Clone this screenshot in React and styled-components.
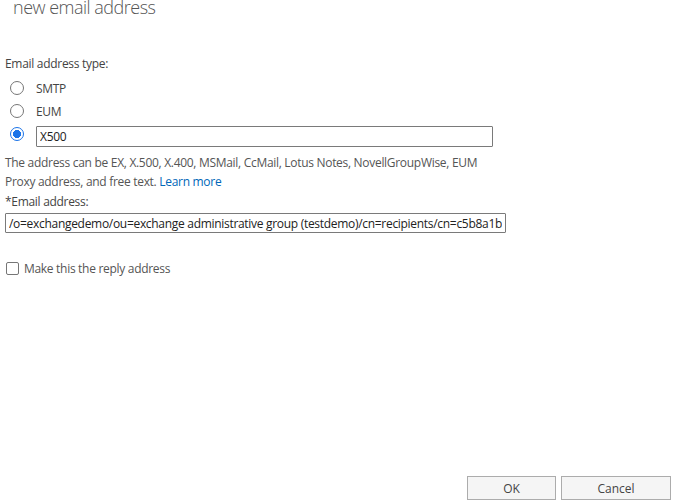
import React, { useState } from "react";
import styled, { createGlobalStyle } from "styled-components";

const GlobalStyle = createGlobalStyle`
  html, body {
    margin: 0;
    padding: 0;
    background: #fff;
  }
  body {
    font-family: "Segoe UI", "Open Sans", "Noto Sans", sans-serif;
    color: #333;
  }
`;

const ADDRESS =
  "/o=exchangedemo/ou=exchange administrative group (testdemo)/cn=recipients/cn=c5b8a1b2c3d4e5f6a7b8c9d0e1f2a3b4-x500";

const App = () => {
  const [type, setType] = useState("x500");
  const [reply, setReply] = useState(false);

  return (
    <>
      <GlobalStyle />
      <Page>
        <Title>new email address</Title>
        <Form>
          <Label>Email address type:</Label>
          <RadioList>
            <RadioRow onClick={() => setType("smtp")}>
              <Radio checked={type === "smtp"} />
              <RadioText>SMTP</RadioText>
            </RadioRow>
            <RadioRow onClick={() => setType("eum")}>
              <Radio checked={type === "eum"} />
              <RadioText>EUM</RadioText>
            </RadioRow>
            <RadioRow onClick={() => setType("x500")}>
              <Radio checked={type === "x500"} />
              <TypeInput defaultValue="X500" />
            </RadioRow>
          </RadioList>
          <Help>
            The address can be EX, X.500, X.400, MSMail, CcMail, Lotus Notes,
            NovellGroupWise, EUM Proxy address, and free text.{" "}
            <a href="#">Learn more</a>
          </Help>
          <Label className="address">*Email address:</Label>
          <AddressInput defaultValue={ADDRESS} />
          <CheckRow onClick={() => setReply(!reply)}>
            <Check checked={reply} />
            <span>Make this the reply address</span>
          </CheckRow>
        </Form>
        <Footer>
          <Button>OK</Button>
          <Button wide>Cancel</Button>
        </Footer>
      </Page>
    </>
  );
};

const Page = styled.div`
  display: flex;
  flex-direction: column;
  height: 504px;
  box-sizing: border-box;
  padding: 0 6px 4px 5px;
  overflow: hidden;
  font-size: 12px;
  letter-spacing: -0.3px;
`;

const Title = styled.div`
  margin: -5px 0 0 8px;
  font-size: 18px;
  font-weight: 300;
  line-height: 24px;
  color: #555;
  letter-spacing: -0.5px;
`;

const Form = styled.div`
  display: flex;
  flex-direction: column;
  margin-top: 37px;
`;

const Label = styled.div`
  line-height: 16px;
  color: #444;
  &.address {
    margin-top: 3px;
  }
`;

const RadioList = styled.div`
  display: flex;
  flex-direction: column;
  gap: 3px;
  margin-top: 6px;
`;

const RadioRow = styled.div`
  display: flex;
  align-items: center;
  height: 20px;
  cursor: pointer;
`;

const Radio = styled.span`
  box-sizing: border-box;
  width: 14px;
  height: 14px;
  margin: 0 12px 0 5px;
  border-radius: 50%;
  border: 1px solid ${(p) => (p.checked ? "#1a73e8" : "#767676")};
  background: ${(p) =>
    p.checked
      ? "radial-gradient(circle, #1a73e8 0 3.8px, #fff 4.3px)"
      : "#fff"};
  flex-shrink: 0;
`;

const RadioText = styled.span`
  color: #444;
`;

const inputBase = `
  box-sizing: border-box;
  height: 21px;
  border: 1px solid #7a7a7a;
  border-radius: 1px;
  font-family: inherit;
  font-size: 12px;
  letter-spacing: -0.3px;
  color: #222;
  outline: none;
  background: #fff;
`;

const TypeInput = styled.input`
  ${inputBase}
  width: 457px;
  margin-top: 5px;
  padding: 0 3px;
`;

const Help = styled.p`
  margin: 9px 0 0;
  width: 490px;
  line-height: 19px;
  color: #555;
  a {
    color: #0067b8;
    text-decoration: none;
  }
`;

const AddressInput = styled.input`
  ${inputBase}
  width: 501px;
  height: 20px;
  margin-top: 3px;
  padding: 0 3px;
`;

const CheckRow = styled.div`
  display: flex;
  align-items: center;
  gap: 5px;
  margin-top: 27px;
  color: #555;
  cursor: pointer;
`;

const Check = styled.span`
  box-sizing: border-box;
  width: 13px;
  height: 13px;
  margin-left: 1px;
  border: 1px solid #767676;
  border-radius: 2px;
  background: ${(p) => (p.checked ? "#1a73e8" : "#fff")};
`;

const Footer = styled.div`
  display: flex;
  justify-content: flex-end;
  gap: 5px;
  margin-top: auto;
`;

const Button = styled.button`
  width: ${(p) => (p.wide ? "110px" : "89px")};
  height: 24px;
  border: 1px solid #acacac;
  border-radius: 0;
  background: #f5f5f5;
  font-family: inherit;
  font-size: 12px;
  color: #444;
  cursor: pointer;
`;

export default App;
